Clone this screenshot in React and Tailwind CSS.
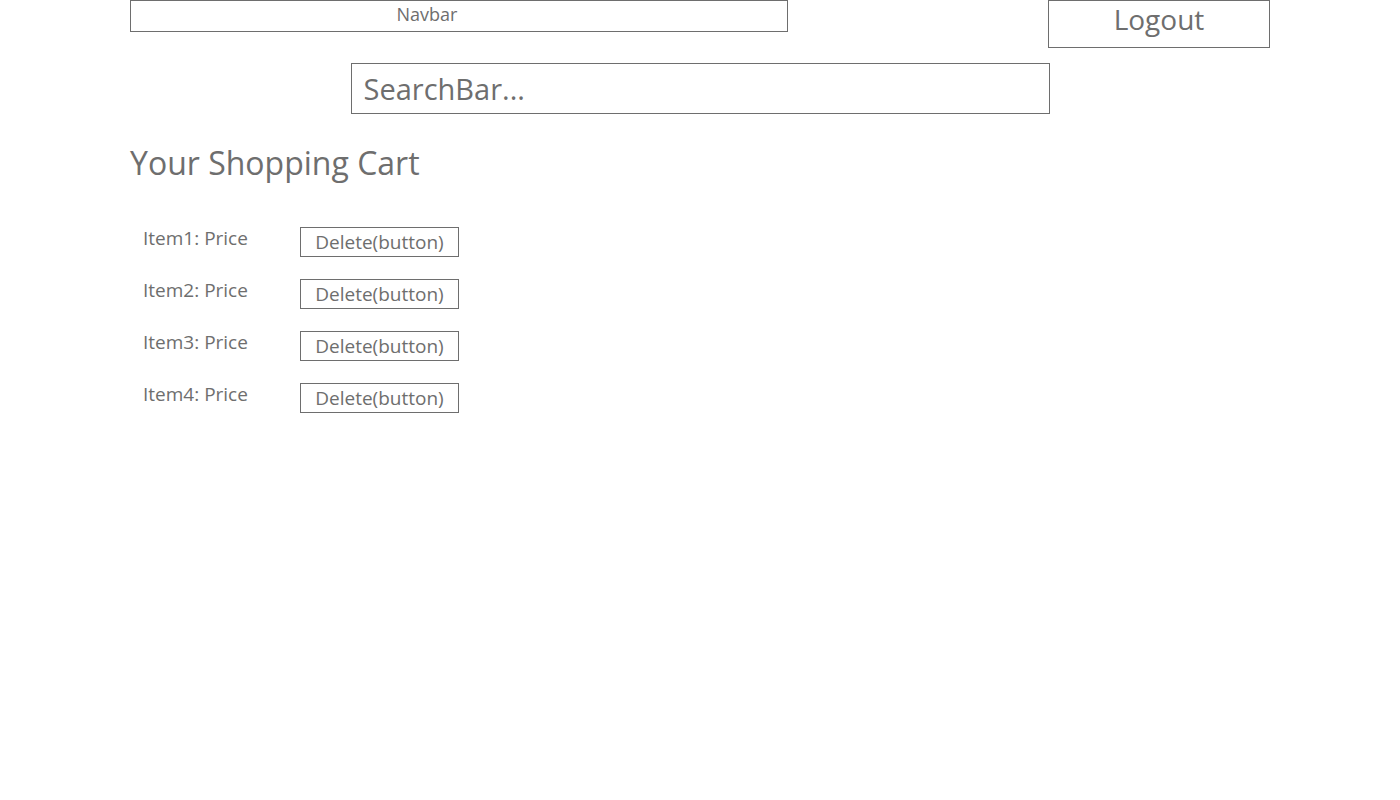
const ITEMS = ["Item1", "Item2", "Item3", "Item4"];

export default function App() {
  return (
    <div
      className="min-h-screen w-full bg-white text-[#6e6e6e]"
      style={{ fontFamily: '"Open Sans", "Noto Sans", sans-serif' }}
    >
      <div className="px-[130px]">
        {/* top row */}
        <div className="flex items-start justify-between">
          <div className="flex h-8 w-[658px] items-center justify-center border border-[#6e6e6e] pr-[64px] pb-1 text-[18px] leading-none">
            Navbar
          </div>
          <button className="flex h-12 w-[222px] items-center justify-center border border-[#6e6e6e] pb-[10px] text-[28px] leading-none">
            Logout
          </button>
        </div>

        {/* search */}
        <div className="mt-[15px] flex justify-center">
          <div className="flex h-[51px] w-[699px] items-center border border-[#6e6e6e] px-3 text-[29px] leading-none">
            SearchBar...
          </div>
        </div>

        <h1 className="mt-[33px] text-[32px] leading-none">Your Shopping Cart</h1>

        {/* cart rows */}
        <div className="mt-[48px] flex flex-col gap-[22px] pl-[13px]">
          {ITEMS.map((name) => (
            <div key={name} className="flex items-start">
              <div className="w-[157px] pt-[2px] text-[19px] leading-none">{name}: Price</div>
              <button className="flex h-[30px] w-[159px] items-center justify-center border border-[#6e6e6e] text-[19px] leading-none">
                Delete(button)
              </button>
            </div>
          ))}
        </div>
      </div>
    </div>
  );
}
